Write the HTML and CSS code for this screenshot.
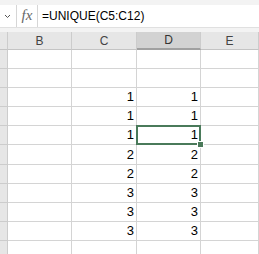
FILE: index.html
```html
<!DOCTYPE html>
<html>
<head>
<meta charset="utf-8">
<link rel="stylesheet" href="styles.css">
</head>
<body>
<div class="app">
  <div class="topstrip"></div>
  <div class="fbar">
    <div class="namebox">
      <svg width="7" height="5" viewBox="0 0 7 5"><path d="M1 1 L3.5 3.5 L6 1" fill="none" stroke="#555" stroke-width="1"/></svg>
    </div>
    <div class="fx">fx</div>
    <div class="formula">=UNIQUE(<span class="ref">C5:C12</span>)</div>
  </div>
  <div class="band"></div>
  <div class="sheet">
    <div class="hd corner"></div>
    <div class="hd">B</div>
    <div class="hd">C</div>
    <div class="hd active">D</div>
    <div class="hd">E</div>

    <div class="rh"></div><div class="c"></div><div class="c"></div><div class="c"></div><div class="c"></div>
    <div class="rh"></div><div class="c"></div><div class="c"></div><div class="c"></div><div class="c"></div>
    <div class="rh"></div><div class="c"></div><div class="c">1</div><div class="c">1</div><div class="c"></div>
    <div class="rh"></div><div class="c"></div><div class="c">1</div><div class="c">1</div><div class="c"></div>
    <div class="rh"></div><div class="c"></div><div class="c">1</div><div class="c sel">1</div><div class="c"></div>
    <div class="rh"></div><div class="c"></div><div class="c">2</div><div class="c">2</div><div class="c"></div>
    <div class="rh"></div><div class="c"></div><div class="c">2</div><div class="c">2</div><div class="c"></div>
    <div class="rh"></div><div class="c"></div><div class="c">3</div><div class="c">3</div><div class="c"></div>
    <div class="rh"></div><div class="c"></div><div class="c">3</div><div class="c">3</div><div class="c"></div>
    <div class="rh"></div><div class="c"></div><div class="c">3</div><div class="c">3</div><div class="c"></div>
    <div class="rh"></div><div class="c"></div><div class="c"></div><div class="c"></div><div class="c"></div>
  </div>
</div>
</body>
</html>
```
FILE: styles.css
```css
html, body {
  margin: 0;
  padding: 0;
  background: #ffffff;
  overflow: hidden;
}
.app {
  width: 259px;
  height: 254px;
  overflow: hidden;
  font-family: "Liberation Sans", Arial, sans-serif;
}
.topstrip {
  height: 5px;
  background: #f3f3f3;
}
.fbar {
  display: flex;
  height: 22px;
  background: #ffffff;
  align-items: stretch;
}
.namebox {
  width: 17px;
  border-right: 1px solid #d6d6d6;
  display: flex;
  align-items: center;
  justify-content: center;
  padding-right: 2px;
  box-sizing: border-box;
}
.fx {
  width: 21px;
  border-right: 1px solid #d6d6d6;
  font-family: "Liberation Serif", serif;
  font-style: italic;
  font-size: 15px;
  color: #666;
  display: flex;
  align-items: center;
  justify-content: center;
  box-sizing: border-box;
  padding-bottom: 1px;
}
.formula {
  padding-left: 4px;
  font-size: 12px;
  color: #000;
  display: flex;
  align-items: center;
  white-space: nowrap;
}
.ref { color: #000; }
.band {
  height: 5px;
  background: #f3f3f3;
  border-top: 1px solid #e0e0e0;
  box-sizing: border-box;
}
.sheet {
  display: grid;
  grid-template-columns: 8px 64px 65px 64px 1fr;
  grid-template-rows: 18px repeat(11, 19.1px);
}
.hd {
  background: #e6e6e6;
  border-right: 1px solid #cccccc;
  border-bottom: 1px solid #c4c4c4;
  font-size: 12px;
  color: #444;
  display: flex;
  align-items: center;
  justify-content: center;
}
.hd.active {
  background: #d2d2d2;
  border-bottom: 2px solid #a0a0a0;
  color: #333;
}
.rh {
  background: #e6e6e6;
  border-right: 1px solid #cccccc;
  border-bottom: 1px solid #cccccc;
}
.c {
  border-right: 1px solid #d4d4d4;
  border-bottom: 1px solid #d4d4d4;
  font-size: 13px;
  color: #000;
  display: flex;
  align-items: flex-end;
  justify-content: flex-end;
  padding: 0 2px 2px 0;
  box-sizing: border-box;
  position: relative;
}
.c.sel::after {
  content: "";
  position: absolute;
  left: -1px;
  top: -1px;
  right: -1px;
  bottom: -1px;
  border: 2px solid #4a7a5a;
}
.c.sel::before {
  content: "";
  position: absolute;
  right: -4px;
  bottom: -4px;
  width: 5px;
  height: 5px;
  background: #4a7a5a;
  border: 1px solid #fff;
  z-index: 2;
}
```
